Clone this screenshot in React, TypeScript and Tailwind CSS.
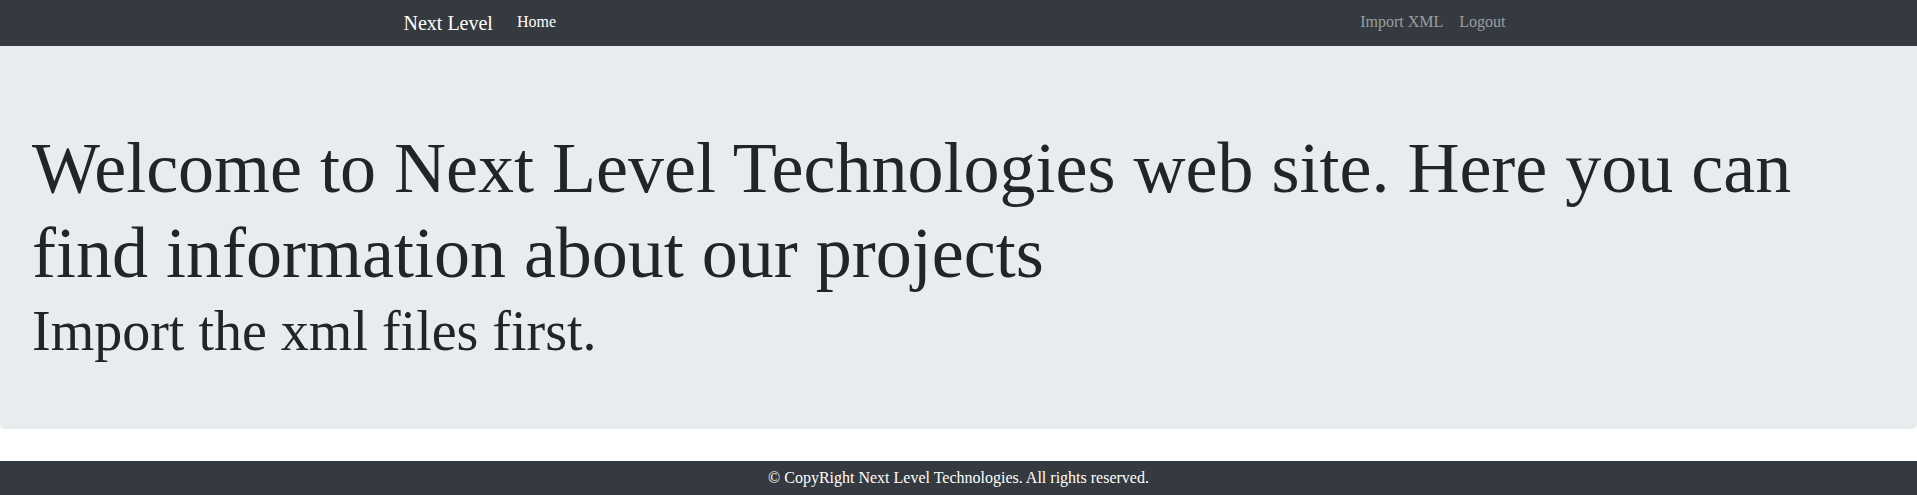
import React from 'react';

const App = () => {
  return (
    <div className="min-h-screen bg-white text-[#212529] font-['Liberation_Serif','Times_New_Roman',serif]">
      {/* Navbar */}
      <nav className="h-[46px] bg-[#343a40]">
        <div className="mx-auto flex h-full w-[1140px] items-center px-[15px]">
          <a className="mr-4 pb-[1px] text-[20px] leading-[30px] text-white">Next Level</a>
          <a className="px-2 pb-[2px] text-[16px] leading-6 text-white">Home</a>
          <div className="ml-auto flex">
            <a className="px-2 pb-[2px] text-[16px] leading-6 text-white/50">Import XML</a>
            <a className="px-2 pb-[2px] text-[16px] leading-6 text-white/50">Logout</a>
          </div>
        </div>
      </nav>

      {/* Jumbotron */}
      <div className="mb-8 rounded-b-[5px] bg-[#e9ecef] px-8 pt-[80px] pb-[63px]">
        <h1 className="text-[72px] leading-[85px] font-normal">
          Welcome to Next Level Technologies web site. Here you can find information about our projects
        </h1>
        <p className="text-[56px] leading-[70px]">Import the xml files first.</p>
      </div>

      {/* Footer */}
      <footer className="h-[34px] bg-[#343a40] pt-[5px] text-center text-[16px] leading-6 text-white">
        © CopyRight Next Level Technologies. All rights reserved.
      </footer>
    </div>
  );
};

export default App;
